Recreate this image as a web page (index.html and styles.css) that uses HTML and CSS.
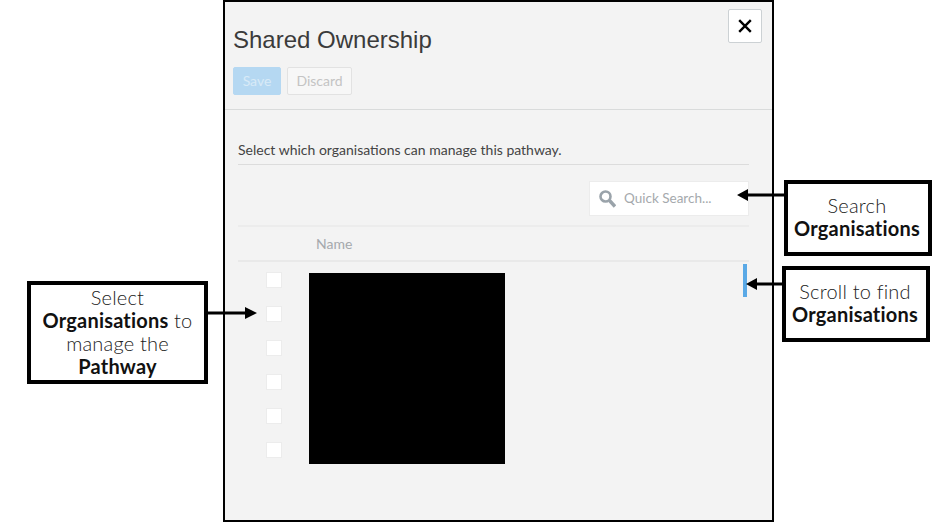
FILE: index.html
```html
<!DOCTYPE html>
<html lang="en">
<head>
<meta charset="utf-8">
<title>Shared Ownership</title>
<link rel="stylesheet" href="styles.css">
</head>
<body>
<main class="modal">
  <header class="head">
    <button class="close" type="button" aria-label="Close">
      <svg width="14" height="14" viewBox="0 0 14 14"><path d="M1.2 1.2 12.8 12.8M12.8 1.2 1.2 12.8" stroke="#000" stroke-width="2.4" fill="none"/></svg>
    </button>
    <h1 class="title">Shared Ownership</h1>
    <div class="actions">
      <button class="btn btn-save" type="button">Save</button>
      <button class="btn btn-discard" type="button">Discard</button>
    </div>
  </header>
  <section class="content">
    <p class="intro">Select which organisations can manage this pathway.</p>
    <div class="search-row">
      <div class="search">
        <svg width="17" height="18" viewBox="0 0 17 18"><circle cx="6.5" cy="6.5" r="5" fill="none" stroke="#9aa3aa" stroke-width="2.6"/><path d="M10.5 10.5 16 16.5" stroke="#9aa3aa" stroke-width="3.4" fill="none"/></svg>
        <span class="placeholder">Quick Search...</span>
      </div>
    </div>
    <div class="table-head"><span class="name-col">Name</span></div>
    <div class="table-body">
      <div class="checks">
        <span class="check"></span><span class="check"></span><span class="check"></span>
        <span class="check"></span><span class="check"></span><span class="check"></span>
      </div>
      <div class="redacted"></div>
      <div class="scrollbar"></div>
    </div>
  </section>
</main>

<aside class="callout callout-select">Select<br><b>Organisations</b> to<br>manage the<br><b>Pathway</b></aside>
<aside class="callout callout-search">Search<br><b>Organisations</b></aside>
<aside class="callout callout-scroll">Scroll to find<br><b>Organisations</b></aside>

<svg class="arrow arrow-select" width="49" height="12" viewBox="0 0 49 12"><path d="M0 4.4H37V0L49 6 37 12V7.6H0Z" fill="#000"/></svg>
<svg class="arrow arrow-search" width="48" height="12" viewBox="0 0 48 12"><path d="M48 4.5H11V0L0 6 11 12V7.5H48Z" fill="#000"/></svg>
<svg class="arrow arrow-scroll" width="37" height="12" viewBox="0 0 37 12"><path d="M37 4.5H11V0L0 6 11 12V7.5H37Z" fill="#000"/></svg>
</body>
</html>
```
FILE: styles.css
```css
* { box-sizing: border-box; }
html, body { margin: 0; height: 100%; }
body { background: #fff; position: relative; overflow: hidden; font-family: "Lato", sans-serif; }

.modal {
  margin-left: 223px;
  width: 551px;
  height: 522px;
  background: #f3f3f3;
  border: 2px solid #000;
}

.head {
  position: relative;
  height: 108px;
  padding: 23px 8px 0;
  border-bottom: 1px solid #d9dbdb;
}
.title {
  margin: 0;
  font: 400 24px/30px "Liberation Sans", Arial, sans-serif;
  color: #3b3b3b;
}
.close {
  position: absolute;
  top: 7px;
  right: 10px;
  width: 34px;
  height: 34px;
  padding: 0;
  display: flex;
  align-items: center;
  justify-content: center;
  background: #fff;
  border: 1px solid #ccd1d4;
  border-radius: 2px;
}
.actions { display: flex; gap: 6px; margin-top: 12px; }
.btn {
  height: 28px;
  padding: 0;
  border-radius: 2px;
  font: 400 14px/26px "Lato", sans-serif;
}
.btn-save { width: 48px; background: #b5d8f2; border: 1px solid #b5d8f2; color: #d8eaf7; }
.btn-discard { width: 65px; background: #f7f7f7; border: 1px solid #e2e2e2; color: #c4c4c4; }

.content { padding: 0 23px 0 13px; }
.intro {
  margin: 0;
  height: 55px;
  padding-top: 31px;
  border-bottom: 1px solid #dcdcdc;
  font-size: 14px;
  line-height: 18px;
  color: #444;
}
.search-row {
  display: flex;
  justify-content: flex-end;
  height: 62px;
  padding-top: 16px;
  border-bottom: 2px solid #ececec;
}
.search {
  width: 160px;
  height: 35px;
  display: flex;
  align-items: center;
  gap: 8px;
  padding-left: 9px;
  background: #fff;
  border: 1px solid #ececec;
}
.placeholder { font-size: 13.5px; line-height: 16px; margin-top: -2px; color: #a5a9ad; }

.table-head {
  height: 35px;
  padding: 8px 0 0 78px;
  border-bottom: 2px solid #e9e9e9;
  font-size: 14px;
  line-height: 18px;
  color: #a5a9ad;
}

.table-body { position: relative; display: flex; }
.checks {
  display: flex;
  flex-direction: column;
  gap: 18px;
  margin: 10px 0 0 28px;
}
.check {
  display: block;
  width: 16px;
  height: 16px;
  background: #fff;
  border: 1px solid #ececec;
}
.redacted {
  width: 196px;
  height: 191px;
  margin: 11px 0 0 27px;
  background: #000;
}
.scrollbar {
  position: absolute;
  top: 2px;
  right: 2px;
  width: 4px;
  height: 33px;
  background: #5aa9e6;
}

.callout {
  position: absolute;
  background: #fff;
  border: 4px solid #000;
  text-align: center;
  font-family: "Lato", sans-serif;
  font-weight: 300;
  font-size: 20px;
  letter-spacing: 0.2px;
  line-height: 23px;
  color: #222;
}
.callout b { font-weight: 700; color: #111; }
.callout-select { left: 27px; top: 281px; width: 181px; height: 103px; padding-top: 1px; }
.callout-search { left: 784px; top: 180px; width: 148px; height: 76px; padding: 10px 2px 0 0; }
.callout-scroll { left: 782px; top: 266px; width: 148px; height: 76px; padding: 10px 2px 0 0; }

.arrow { position: absolute; }
.arrow-select { left: 208px; top: 307px; }
.arrow-search { left: 737px; top: 189px; }
.arrow-scroll { left: 746px; top: 278px; }
```
